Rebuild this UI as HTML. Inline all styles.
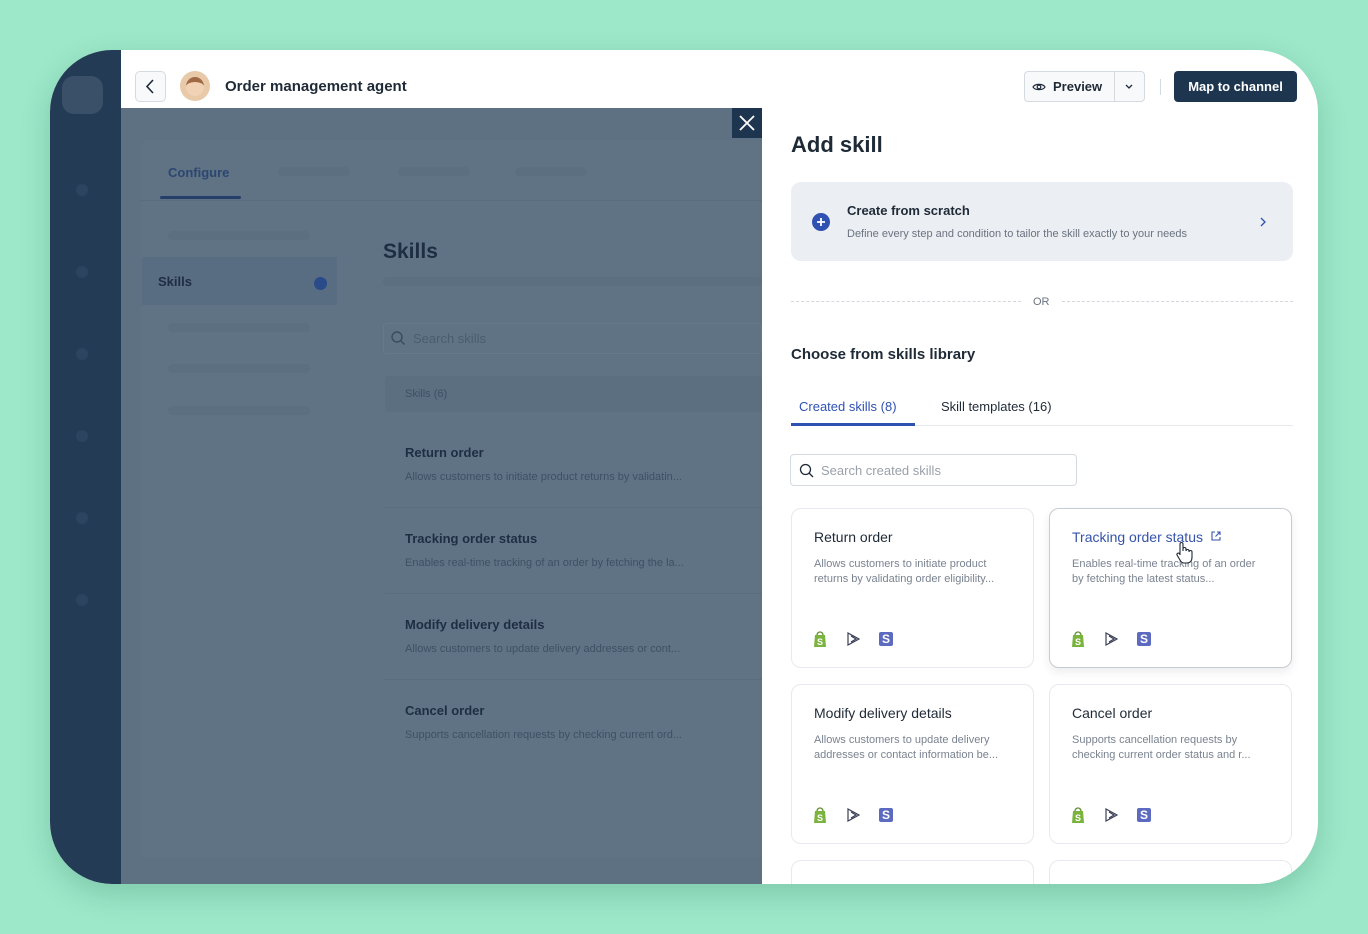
<!DOCTYPE html>
<html><head><meta charset="utf-8"><style>
*{box-sizing:border-box;margin:0;padding:0}
body{width:1368px;height:934px;background:#9ce8c9;font-family:"Liberation Sans",sans-serif;position:relative;overflow:hidden}
.a{position:absolute}
#dev{left:50px;top:50px;width:1268px;height:834px;border-radius:62px;overflow:hidden;background:#fff;box-shadow:0 10px 30px rgba(0,60,40,.18)}
.bar{background:#5b6f81;border-radius:5px;height:9px}
.card{background:#fff;border:1px solid #e6e9ee;border-radius:10px;width:243px;height:160px}
.card h4{position:absolute;left:22px;top:20px;font-size:14px;font-weight:normal;color:#1f2a37}
.card p{position:absolute;left:22px;top:48px;font-size:11px;line-height:15px;color:#7a8390;width:192px}
.ic{position:absolute;top:118px;width:24px;height:24px;border-radius:5px;display:flex;align-items:center;justify-content:center}
</style></head><body>
<div id="dev" class="a">
 <div class="a" style="left:0;top:0;width:71px;height:834px;background:#243b56"></div>
 <div class="a" style="left:12px;top:26px;width:41px;height:38px;border-radius:12px;background:#3a5069"></div>
 <div class="a" style="left:26px;top:134px;width:12px;height:12px;border-radius:50%;background:#2c4460"></div>
 <div class="a" style="left:26px;top:216px;width:12px;height:12px;border-radius:50%;background:#2c4460"></div>
 <div class="a" style="left:26px;top:298px;width:12px;height:12px;border-radius:50%;background:#2c4460"></div>
 <div class="a" style="left:26px;top:380px;width:12px;height:12px;border-radius:50%;background:#2c4460"></div>
 <div class="a" style="left:26px;top:462px;width:12px;height:12px;border-radius:50%;background:#2c4460"></div>
 <div class="a" style="left:26px;top:544px;width:12px;height:12px;border-radius:50%;background:#2c4460"></div>
 <div class="a" style="left:85px;top:21px;width:31px;height:31px;border:1px solid #d5dae1;border-radius:5px;background:#f8f9fb"><svg width="29" height="29" viewBox="0 0 29 29"><path d="M17 8l-6 6.5 6 6.5" fill="none" stroke="#1f2a37" stroke-width="1.6"/></svg></div>
 <div class="a" style="left:130px;top:21px;width:30px;height:30px;border-radius:50%;background:#e8c9a8"><div class="a" style="left:6px;top:6px;width:18px;height:19px;border-radius:50%;background:#f2d2b5;border-top:5px solid #a06a45"></div></div>
 <div class="a" style="left:175px;top:28px;font-size:15px;font-weight:bold;color:#1f2a37">Order management agent</div>
 <div class="a" style="left:974px;top:21px;width:121px;height:31px;border:1px solid #d5dae1;border-radius:4px;background:#f8f9fb"></div>
 <div class="a" style="left:1064px;top:21px;width:1px;height:31px;background:#d5dae1"></div>
 <svg class="a" style="left:982px;top:30px" width="14" height="14" viewBox="0 0 14 14"><path d="M1 7c2-3.5 10-3.5 12 0c-2 3.5-10 3.5-12 0z" fill="none" stroke="#1f2a37" stroke-width="1.2"/><circle cx="7" cy="7" r="1.8" fill="none" stroke="#1f2a37" stroke-width="1.2"/></svg>
 <div class="a" style="left:1003px;top:29px;font-size:13px;font-weight:bold;color:#1f2a37">Preview</div>
 <svg class="a" style="left:1074px;top:31px" width="10" height="10"><path d="M2 4l3 3 3-3" fill="none" stroke="#1f2a37" stroke-width="1.3"/></svg>
 <div class="a" style="left:1110px;top:29px;width:1px;height:16px;background:#d5dae1"></div>
 <div class="a" style="left:1124px;top:21px;width:123px;height:31px;border-radius:4px;background:#1e3550;color:#fff;font-size:13px;font-weight:bold;text-align:center;line-height:31px">Map to channel</div>
 <div class="a" style="left:71px;top:58px;width:641px;height:776px;background:#5e7183"></div>
 <div class="a" style="left:91px;top:90px;width:621px;height:718px;background:#607385;border-radius:6px"></div>
 <div class="a" style="left:91px;top:150px;width:621px;height:1px;background:#5a6d7e"></div>
 <div class="a" style="left:118px;top:115px;font-size:13px;font-weight:bold;color:#2c4670">Configure</div>
 <div class="a" style="left:110px;top:146px;width:81px;height:3px;background:#253f6a;border-radius:2px"></div>
 <div class="a bar" style="left:228px;top:117px;width:72px"></div>
 <div class="a bar" style="left:348px;top:117px;width:72px"></div>
 <div class="a bar" style="left:465px;top:117px;width:72px"></div>
 <div class="a bar" style="left:118px;top:181px;width:142px"></div>
 <div class="a" style="left:92px;top:207px;width:195px;height:48px;background:#586d82"></div>
 <div class="a" style="left:108px;top:224px;font-size:13px;font-weight:bold;color:#1f2d42">Skills</div>
 <div class="a" style="left:264px;top:227px;width:13px;height:13px;border-radius:50%;background:#2a4a8a"></div>
 <div class="a bar" style="left:118px;top:273px;width:142px"></div>
 <div class="a bar" style="left:118px;top:314px;width:142px"></div>
 <div class="a bar" style="left:118px;top:356px;width:142px"></div>
 <div class="a" style="left:333px;top:190px;font-size:21px;font-weight:bold;color:#1f2d42">Skills</div>
 <div class="a bar" style="left:333px;top:227px;width:379px"></div>
 <div class="a" style="left:333px;top:273px;width:379px;height:31px;border:1px solid #677a8b;border-radius:4px"></div>
 <svg class="a" style="left:340px;top:280px" width="16" height="16"><circle cx="7" cy="7" r="5" fill="none" stroke="#3a4b5d" stroke-width="1.4"/><path d="M11 11l3.5 3.5" stroke="#3a4b5d" stroke-width="1.4"/></svg>
 <div class="a" style="left:363px;top:281px;font-size:13px;color:#4a5c6d">Search skills</div>
 <div class="a" style="left:335px;top:326px;width:377px;height:36px;background:#5b6f81;border-radius:4px"></div>
 <div class="a" style="left:355px;top:338px;font-size:11px;color:#3e5063">Skills (6)</div>
 <div class="a" style="left:355px;top:395px;font-size:13px;font-weight:bold;color:#1f2d42">Return order</div>
 <div class="a" style="left:355px;top:421px;font-size:11px;color:#3e5063">Allows customers to initiate product returns by validatin...</div>
 <div class="a" style="left:335px;top:457px;width:377px;height:1px;background:#5a6d7e"></div>
 <div class="a" style="left:355px;top:481px;font-size:13px;font-weight:bold;color:#1f2d42">Tracking order status</div>
 <div class="a" style="left:355px;top:507px;font-size:11px;color:#3e5063">Enables real-time tracking of an order by fetching the la...</div>
 <div class="a" style="left:335px;top:543px;width:377px;height:1px;background:#5a6d7e"></div>
 <div class="a" style="left:355px;top:567px;font-size:13px;font-weight:bold;color:#1f2d42">Modify delivery details</div>
 <div class="a" style="left:355px;top:593px;font-size:11px;color:#3e5063">Allows customers to update delivery addresses or cont...</div>
 <div class="a" style="left:335px;top:629px;width:377px;height:1px;background:#5a6d7e"></div>
 <div class="a" style="left:355px;top:653px;font-size:13px;font-weight:bold;color:#1f2d42">Cancel order</div>
 <div class="a" style="left:355px;top:679px;font-size:11px;color:#3e5063">Supports cancellation requests by checking current ord...</div>
 <div class="a" style="left:682px;top:58px;width:30px;height:30px;background:#1e3550"><svg width="30" height="30"><path d="M8 8l14 14M22 8L8 22" stroke="#fff" stroke-width="1.8"/></svg></div>
 <div class="a" style="left:741px;top:82px;font-size:22px;font-weight:bold;color:#1f2a37">Add skill</div>
 <div class="a" style="left:741px;top:132px;width:502px;height:79px;background:#ebeef2;border-radius:10px"></div>
 <div class="a" style="left:762px;top:163px;width:18px;height:18px;border-radius:50%;background:#2f51b2"><svg width="18" height="18"><path d="M9 5v8M5 9h8" stroke="#fff" stroke-width="1.8"/></svg></div>
 <div class="a" style="left:797px;top:153px;font-size:13px;font-weight:bold;color:#1f2a37">Create from scratch</div>
 <div class="a" style="left:797px;top:178px;font-size:11px;color:#6b7380">Define every step and condition to tailor the skill exactly to your needs</div>
 <svg class="a" style="left:1207px;top:166px" width="12" height="12"><path d="M4 2l4 4-4 4" fill="none" stroke="#2f51b2" stroke-width="1.3"/></svg>
 <div class="a" style="left:741px;top:251px;width:230px;border-top:1px dashed #d3d8df"></div>
 <div class="a" style="left:1012px;top:251px;width:231px;border-top:1px dashed #d3d8df"></div>
 <div class="a" style="left:983px;top:246px;font-size:11px;color:#6b7380">OR</div>
 <div class="a" style="left:741px;top:296px;font-size:15px;font-weight:bold;color:#1f2a37">Choose from skills library</div>
 <div class="a" style="left:741px;top:375px;width:502px;height:1px;background:#e6e9ee"></div>
 <div class="a" style="left:749px;top:349px;font-size:13px;color:#2f51b2">Created skills (8)</div>
 <div class="a" style="left:741px;top:373px;width:124px;height:3px;background:#2f51b2"></div>
 <div class="a" style="left:891px;top:349px;font-size:13px;color:#1f2a37">Skill templates (16)</div>
 <div class="a" style="left:740px;top:404px;width:287px;height:32px;border:1px solid #d5dae1;border-radius:4px"></div>
 <svg class="a" style="left:749px;top:413px" width="15" height="15"><circle cx="6.5" cy="6.5" r="5" fill="none" stroke="#1f2a37" stroke-width="1.3"/><path d="M10 10l4 4" stroke="#1f2a37" stroke-width="1.3"/></svg>
 <div class="a" style="left:771px;top:413px;font-size:13px;color:#9aa1ab">Search created skills</div>

 <div class="a card" style="left:741px;top:458px"><h4>Return order</h4><p>Allows customers to initiate product returns by validating order eligibility...</p>
  <div class="ic" style="left:16px"><svg width="16" height="18"><path d="M3 5h10l1 12H2z" fill="#7ab33d"/><path d="M5 5a3 3 0 016 0" fill="none" stroke="#5e8e2e" stroke-width="1.3"/><text x="5" y="15" font-size="9" font-weight="bold" fill="#fff" font-family="Liberation Sans">S</text></svg></div>
  <div class="ic" style="left:49px"><svg width="14" height="14"><path d="M2 1l11 6-11 6z M5 4l5 3-5 3" fill="none" stroke="#3a3f56" stroke-width="1.2"/></svg></div>
  <div class="ic" style="left:82px"><div style="width:14px;height:14px;background:#5c6bc0;border-radius:2px;color:#fff;font-size:12px;font-weight:bold;text-align:center;line-height:14px">S</div></div>
 </div>
 <div class="a card" style="left:999px;top:458px;border-color:#c6ccd4;box-shadow:0 4px 10px rgba(0,0,0,.08)"><h4 style="color:#3553a8">Tracking order status <svg width="12" height="12" style="margin-left:3px"><path d="M5 2H2v8h8V7M7 2h3v3M10 2L5.5 6.5" fill="none" stroke="#3553a8" stroke-width="1.1"/></svg></h4><p>Enables real-time tracking of an order by fetching the latest status...</p>
  <div class="ic" style="left:16px"><svg width="16" height="18"><path d="M3 5h10l1 12H2z" fill="#7ab33d"/><path d="M5 5a3 3 0 016 0" fill="none" stroke="#5e8e2e" stroke-width="1.3"/><text x="5" y="15" font-size="9" font-weight="bold" fill="#fff" font-family="Liberation Sans">S</text></svg></div>
  <div class="ic" style="left:49px"><svg width="14" height="14"><path d="M2 1l11 6-11 6z M5 4l5 3-5 3" fill="none" stroke="#3a3f56" stroke-width="1.2"/></svg></div>
  <div class="ic" style="left:82px"><div style="width:14px;height:14px;background:#5c6bc0;border-radius:2px;color:#fff;font-size:12px;font-weight:bold;text-align:center;line-height:14px">S</div></div>
  <svg class="a" style="left:124px;top:32px" width="20" height="24"><path d="M6 10V3a1.5 1.5 0 013 0v7V8a1.5 1.5 0 013 0v2a1.5 1.5 0 013 0v1a1.5 1.5 0 013 0v5c0 4-2 6-5 6h-3c-2 0-3-1-4-3l-3-5a1.5 1.5 0 012.5-1.5L6 14z" fill="#fff" stroke="#1f2a37" stroke-width="1.1"/></svg>
 </div>
 <div class="a card" style="left:741px;top:634px"><h4>Modify delivery details</h4><p>Allows customers to update delivery addresses or contact information be...</p>
  <div class="ic" style="left:16px"><svg width="16" height="18"><path d="M3 5h10l1 12H2z" fill="#7ab33d"/><path d="M5 5a3 3 0 016 0" fill="none" stroke="#5e8e2e" stroke-width="1.3"/><text x="5" y="15" font-size="9" font-weight="bold" fill="#fff" font-family="Liberation Sans">S</text></svg></div>
  <div class="ic" style="left:49px"><svg width="14" height="14"><path d="M2 1l11 6-11 6z M5 4l5 3-5 3" fill="none" stroke="#3a3f56" stroke-width="1.2"/></svg></div>
  <div class="ic" style="left:82px"><div style="width:14px;height:14px;background:#5c6bc0;border-radius:2px;color:#fff;font-size:12px;font-weight:bold;text-align:center;line-height:14px">S</div></div>
 </div>
 <div class="a card" style="left:999px;top:634px"><h4>Cancel order</h4><p>Supports cancellation requests by checking current order status and r...</p>
  <div class="ic" style="left:16px"><svg width="16" height="18"><path d="M3 5h10l1 12H2z" fill="#7ab33d"/><path d="M5 5a3 3 0 016 0" fill="none" stroke="#5e8e2e" stroke-width="1.3"/><text x="5" y="15" font-size="9" font-weight="bold" fill="#fff" font-family="Liberation Sans">S</text></svg></div>
  <div class="ic" style="left:49px"><svg width="14" height="14"><path d="M2 1l11 6-11 6z M5 4l5 3-5 3" fill="none" stroke="#3a3f56" stroke-width="1.2"/></svg></div>
  <div class="ic" style="left:82px"><div style="width:14px;height:14px;background:#5c6bc0;border-radius:2px;color:#fff;font-size:12px;font-weight:bold;text-align:center;line-height:14px">S</div></div>
 </div>
 <div class="a card" style="left:741px;top:810px;height:24px;border-bottom:none;border-radius:10px 10px 0 0"></div>
 <div class="a card" style="left:999px;top:810px;height:24px;border-bottom:none;border-radius:10px 10px 0 0"></div>
</div>
</body></html>
